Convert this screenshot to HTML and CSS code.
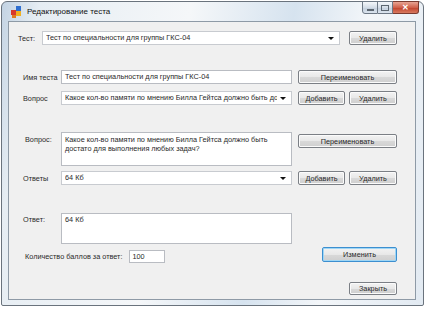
FILE: index.html
```html
<!DOCTYPE html>
<html lang="ru">
<head>
    <meta charset="UTF-8">
    <title>Редактирование теста</title>
    <link rel="stylesheet" href="styles.css">
</head>
<body>
    <div class="window">
        <div class="titlebar">
            <svg class="app-icon" width="12" height="12" viewBox="0 0 12 12">
                <rect x="0" y="4" width="5" height="5" fill="#d8392b"/>
                <rect x="5" y="0" width="5" height="5" fill="#2f6fd0"/>
                <rect x="5" y="5" width="5" height="5" fill="#f0b020"/>
                <rect x="1" y="9" width="4" height="3" fill="#e07a20"/>
            </svg>
            <span class="title">Редактирование теста</span>
            <div class="caption-buttons">
                <div class="cap min"><span></span></div>
                <div class="cap max"><span></span></div>
                <div class="cap close">✕</div>
            </div>
        </div>
        <div class="client">
            <div class="row row-test">
                <div class="label">Тест:</div>
                <div class="field combo wide"><span class="text">Тест по специальности для группы ГКС-04</span></div>
                <div class="btn small">Удалить</div>
            </div>
            <div class="row row-name">
                <div class="label">Имя теста</div>
                <div class="field">Тест по специальности для группы ГКС-04</div>
                <div class="btn rename">Переименовать</div>
            </div>
            <div class="row row-q">
                <div class="label">Вопрос</div>
                <div class="field combo"><span class="text">Какое кол-во памяти по мнению Билла Гейтса должно быть достато для выполнения любых задач?</span></div>
                <div class="btn add">Добавить</div>
                <div class="btn small">Удалить</div>
            </div>
            <div class="row row-qtext">
                <div class="label">Вопрос:</div>
                <div class="field area qarea">Какое кол-во памяти по мнению Билла Гейтса должно быть достато для выполнения любых задач?</div>
                <div class="btn rename">Переименовать</div>
            </div>
            <div class="row row-answers">
                <div class="label">Ответы</div>
                <div class="field combo"><span class="text">64 Кб</span></div>
                <div class="btn add">Добавить</div>
                <div class="btn small">Удалить</div>
            </div>
            <div class="row row-answer">
                <div class="label">Ответ:</div>
                <div class="field area aarea">64 Кб</div>
            </div>
            <div class="row row-score">
                <div class="label score-label">Количество баллов за ответ:</div>
                <div class="field score">100</div>
                <div class="btn change">Изменить</div>
            </div>
            <div class="row row-close">
                <div class="btn small">Закрыть</div>
            </div>
        </div>
    </div>
</body>
</html>
```

FILE: styles.css
```css
body {
    margin: 0;
    background: #ffffff;
    font-family: "Liberation Sans", Arial, sans-serif;
    font-size: 7.3px;
    color: #2a2a2a;
}
.window {
    margin: 1px 0 0 1px;
    width: 423px;
    height: 305px;
    box-sizing: border-box;
    border: 1px solid #6a737d;
    border-radius: 6px 6px 2px 2px;
    background: linear-gradient(100deg, #c3d3e3 0%, #e6edf3 8%, #f5f7f9 40%, #d6e3ef 62%, #f3f6f9 78%, #e2eaf2 100%);
    display: flex;
    flex-direction: column;
    padding: 0 7px 5px 6px;
}
.titlebar {
    height: 19px;
    display: flex;
    align-items: center;
    position: relative;
}
.app-icon {
    margin: 0 4px 0 3px;
}
.title {
    font-size: 8px;
    color: #111;
}
.caption-buttons {
    position: absolute;
    top: -1px;
    right: -3px;
    display: flex;
}
.cap {
    height: 13px;
    box-sizing: border-box;
    border: 1px solid #6d7885;
    background: linear-gradient(#f4f7fa, #d4dde7 50%, #c2cedc 51%, #dbe4ee);
    display: flex;
    align-items: center;
    justify-content: center;
}
.cap.min {
    width: 16px;
    border-radius: 0 0 0 3px;
}
.cap.min span {
    width: 7px;
    height: 2px;
    margin-top: 4px;
    background: #5c6670;
}
.cap.max {
    width: 15px;
    border-left: none;
}
.cap.max span {
    width: 6px;
    height: 4px;
    border: 1px solid #5c6670;
}
.cap.close {
    width: 26px;
    border-left: none;
    border-radius: 0 0 3px 0;
    border-color: #7a3b30;
    background: linear-gradient(#e8a493, #d0604a 50%, #c0402a 51%, #d87a60);
    color: #fff;
    font-size: 8px;
    font-weight: bold;
}
.client {
    flex: 1;
    border: 1px solid #8e9aa6;
    background: #f0f0f0;
    padding: 0 18px 0 0;
    display: flex;
    flex-direction: column;
}
.row {
    display: flex;
    align-items: center;
    padding-left: 14px;
}
.label {
    width: 38px;
    flex-shrink: 0;
}
.field {
    width: 231px;
    height: 14px;
    box-sizing: border-box;
    border: 1px solid #b9bcc2;
    background: #fff;
    padding: 0 3px;
    line-height: 12px;
    white-space: nowrap;
    overflow: hidden;
    flex-shrink: 0;
}
.combo {
    position: relative;
    padding-right: 14px;
    border-color: #c8cbd0;
}
.combo .text {
    display: block;
    overflow: hidden;
}
.combo::after {
    content: "";
    position: absolute;
    right: 5px;
    top: 5px;
    border-left: 3px solid transparent;
    border-right: 3px solid transparent;
    border-top: 3px solid #111;
}
.btn {
    height: 14px;
    box-sizing: border-box;
    border: 1px solid #7b7f85;
    border-radius: 2px;
    background: linear-gradient(#f3f3f3, #e8e8e8 50%, #d9d9d9 51%, #cfcfcf);
    box-shadow: inset 0 0 0 1px #fbfbfb;
    display: flex;
    align-items: center;
    justify-content: center;
    flex-shrink: 0;
}
.btn.small {
    width: 48px;
    margin-left: 4px;
}
.btn.add {
    width: 47px;
    margin-left: 6px;
}
.btn.rename {
    width: 99px;
    margin-left: 6px;
}
.row-test {
    margin-top: 9px;
    padding-left: 9px;
}
.row-test .label {
    width: 24px;
}
.field.wide {
    width: 298px;
    margin-right: 5px;
}
.row-name {
    margin-top: 25px;
}
.row-q {
    margin-top: 7px;
}
.row-qtext {
    margin-top: 27px;
    align-items: flex-start;
}
.row-qtext .label {
    padding-left: 2px;
    width: 36px;
    margin-top: 3px;
}
.row-qtext .btn {
    margin-top: 2px;
}
.area {
    white-space: normal;
    padding: 2px 3px;
    line-height: 9px;
}
.qarea {
    height: 34px;
}
.row-answers {
    margin-top: 5px;
}
.row-answer {
    margin-top: 28px;
    align-items: flex-start;
}
.row-answer .label {
    margin-top: 2px;
}
.aarea {
    height: 31px;
    padding-top: 1px;
}
.row-score {
    margin-top: 3px;
    align-items: flex-end;
    padding-left: 16px;
}
.score-label {
    width: auto;
    margin-bottom: 2px;
    margin-right: 6px;
}
.field.score {
    width: 36px;
    height: 13px;
    margin-left: 0;
}
.btn.change {
    margin-left: auto;
    width: 75px;
    height: 15px;
    margin-bottom: 1px;
    border-color: #3c8fd0;
    box-shadow: inset 0 0 0 1px #9fd6f5;
}
.row-close {
    margin-top: 19px;
    justify-content: flex-end;
}
.row-close .btn {
    height: 13px;
}
```
